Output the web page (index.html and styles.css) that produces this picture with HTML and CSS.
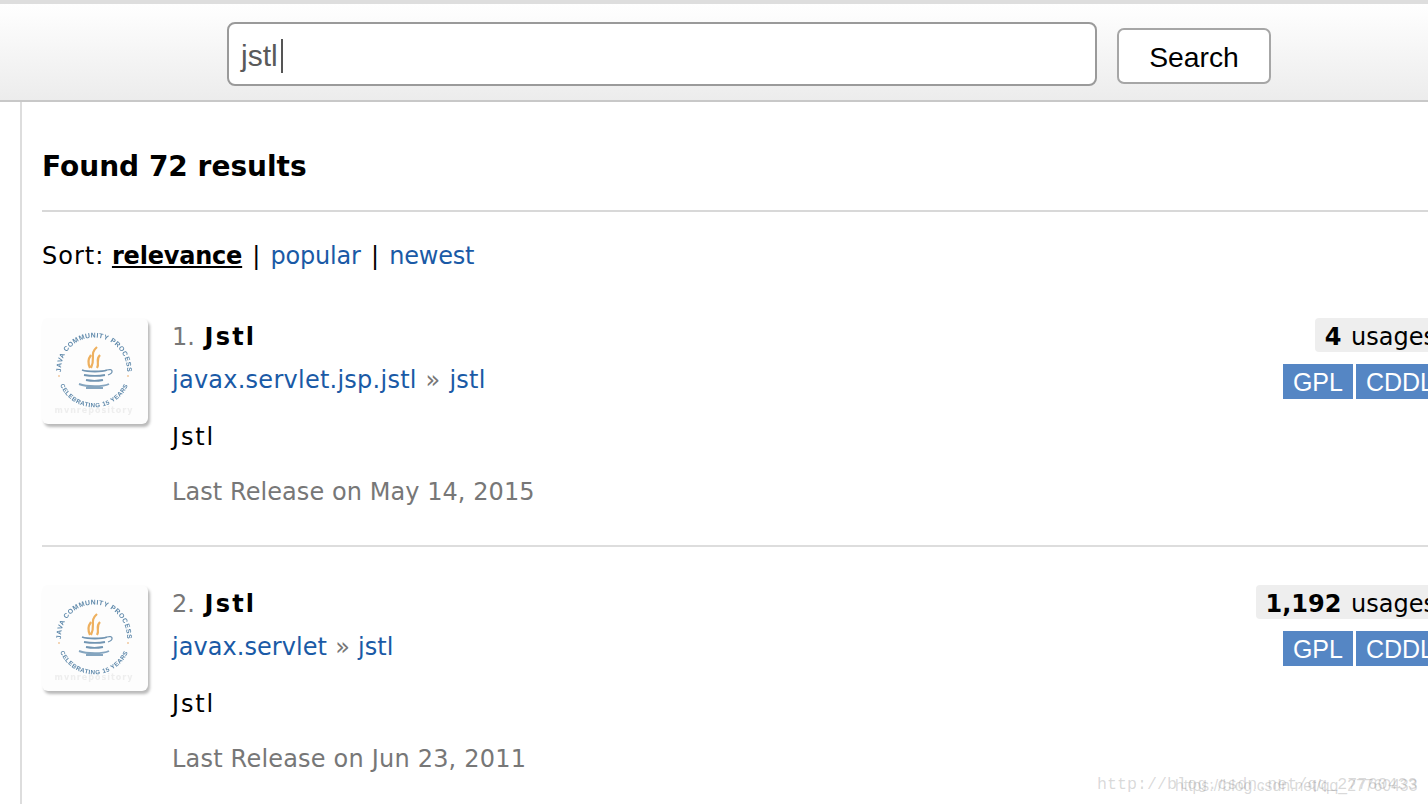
FILE: index.html
```html
<!DOCTYPE html>
<html lang="en">
<head>
<meta charset="utf-8">
<title>Search results</title>
<link rel="stylesheet" href="styles.css">
</head>
<body>
<svg class="defs" width="0" height="0" aria-hidden="true">
  <defs>
    <filter id="soft"><feGaussianBlur stdDeviation="0.55"/></filter>
    <path id="arcTop" d="M19 52.5 A33 33 0 0 1 85 52.5"/>
    <path id="arcBottom" d="M15.6 59 A37 37 0 0 0 88.4 59"/>
    <symbol id="jcp" viewBox="0 0 106 106">
      <g filter="url(#soft)">
        <text class="jcp-text"><textPath href="#arcTop" startOffset="50%" text-anchor="middle">JAVA COMMUNITY PROCESS</textPath></text>
        <text class="jcp-text jcp-text-low"><textPath href="#arcBottom" startOffset="50%" text-anchor="middle">CELEBRATING 15 YEARS</textPath></text>
        <circle cx="17" cy="58" r="1" fill="#f0c9a0"/>
        <circle cx="86" cy="58" r="1" fill="#f0c9a0"/>
        <path d="M55 29c-8 7-1 11-6 21M58 37c-5 5 0 8-3 13M49 37c-3 4-3 9-1 13" fill="none" stroke="#eeb05e" stroke-width="2.2"/>
        <path d="M40 52c6 2 20 2 25 0M42 57c6 1 16 1 21 0M44 62c5 1 12 1 17 0" fill="none" stroke="#7295b2" stroke-width="1.8"/>
        <path d="M65 52c6-2 7 3 1 5" fill="none" stroke="#7295b2" stroke-width="1.3"/>
        <path d="M37 66c8 3 24 3 30 0M44 70h17" fill="none" stroke="#85a5bf" stroke-width="1.9"/>
        <text class="jcp-mark" x="52" y="95" text-anchor="middle">mvnrepository</text>
      </g>
    </symbol>
  </defs>
</svg>

<header class="topbar">
  <form class="search">
    <div class="search-input"><span class="search-value">jstl</span><span class="caret"></span></div>
    <button class="search-btn" type="button">Search</button>
  </form>
</header>

<main class="content">
  <h2 class="found">Found 72 results</h2>
  <div class="sort"><span class="sort-label">Sort:</span> <a class="sort-active">relevance</a> <span class="pipe">|</span> <a class="link">popular</a> <span class="pipe">|</span> <a class="link">newest</a></div>

  <article class="result">
    <div class="logo"><svg class="logo-art"><use href="#jcp"/></svg></div>
    <div class="info">
      <div class="title"><span class="num">1.</span> <b class="name">Jstl</b></div>
      <div class="coords"><a class="link">javax.servlet.jsp.jstl</a> <span class="sep">»</span> <a class="link">jstl</a></div>
      <div class="desc">Jstl</div>
      <div class="date">Last Release on May 14, 2015</div>
    </div>
    <div class="meta">
      <div class="usages"><b class="count">4</b> usages</div>
      <div class="licenses"><span class="lic">GPL</span><span class="lic">CDDL</span></div>
    </div>
  </article>

  <article class="result">
    <div class="logo"><svg class="logo-art"><use href="#jcp"/></svg></div>
    <div class="info">
      <div class="title"><span class="num">2.</span> <b class="name">Jstl</b></div>
      <div class="coords coords-tight"><a class="link">javax.servlet</a> <span class="sep">»</span> <a class="link">jstl</a></div>
      <div class="desc">Jstl</div>
      <div class="date date-wide">Last Release on Jun 23, 2011</div>
    </div>
    <div class="meta">
      <div class="usages"><b class="count">1,192</b> usages</div>
      <div class="licenses"><span class="lic">GPL</span><span class="lic">CDDL</span></div>
    </div>
  </article>
</main>

<div class="watermark"><span class="wm-a">http://blog.csdn.net/qq_27760433</span><span class="wm-b">https://blog.csdn.net/qq_27760433</span></div>
</body>
</html>
```
FILE: styles.css
```css
html, body {
  margin: 0;
  height: 804px;
  overflow: hidden;
  background: #fff;
}
body {
  position: relative;
  width: 1428px;
  font-family: "DejaVu Sans", Verdana, sans-serif;
  font-size: 24px;
  color: #000;
}
.defs { position: absolute; }

.topbar {
  height: 96px;
  border-top: 4px solid #dedede;
  border-bottom: 2px solid #c8c8c8;
  background: linear-gradient(#fff, #ececec);
  box-sizing: content-box;
}
.search {
  display: flex;
  align-items: flex-start;
  gap: 20px;
  padding: 18px 0 0 227px;
}
.search-input {
  box-sizing: border-box;
  width: 870px;
  height: 64px;
  display: flex;
  align-items: center;
  padding: 4px 0 0 12px;
  background: #fff;
  border: 2px solid #9a9a9a;
  border-radius: 8px;
  font-family: "Liberation Sans", Arial, sans-serif;
  font-size: 30px;
  color: #5a5a5a;
}
.caret {
  width: 2px;
  height: 34px;
  margin-left: 3px;
  background: #555;
}
.search-btn {
  box-sizing: border-box;
  width: 154px;
  height: 56px;
  margin-top: 6px;
  padding: 2px 0 0;
  background: #fff;
  border: 2px solid #a6a6a6;
  border-radius: 7px;
  font-family: "Liberation Sans", Arial, sans-serif;
  font-size: 28.3px;
  color: #000;
}

.content {
  margin-left: 20px;
  width: 1403px;
  height: 702px;
  padding-left: 20px;
  border-left: 2px solid #ddd;
}
.found {
  margin: 0;
  padding-top: 47px;
  height: 61px;
  line-height: 36px;
  font-size: 28px;
  font-weight: 700;
  border-bottom: 2px solid #d8d8d8;
}
.sort {
  height: 106px;
  padding-top: 27px;
  box-sizing: border-box;
  line-height: 34px;
}
.sort-label { letter-spacing: 1px; }
.sort-active {
  font-weight: 700;
  text-decoration: underline;
  letter-spacing: -.2px;
}
.sort .link { letter-spacing: -.2px; }
.link { color: #1a5aa6; }
.pipe { margin: 0 2.5px; }

.result {
  display: flex;
  align-items: flex-start;
  height: 227px;
  box-sizing: content-box;
  border-bottom: 2px solid #ddd;
}
.result + .result {
  margin-top: 38px;
  border-bottom: 0;
}
.logo {
  flex: none;
  width: 106px;
  height: 106px;
  margin-right: 24px;
  background: #fdfdfd;
  border-radius: 6px;
  box-shadow: 2px 3px 3px #b9b9b9;
}
.logo-art {
  display: block;
  width: 106px;
  height: 106px;
}
.jcp-text {
  font-family: "Liberation Sans", Arial, sans-serif;
  font-size: 6.8px;
  font-weight: 700;
  letter-spacing: .5px;
  fill: #5f89ab;
}
.jcp-text-low { font-size: 6.2px; }
.jcp-mark {
  font-family: "DejaVu Sans", sans-serif;
  font-size: 8px;
  font-weight: 700;
  letter-spacing: 1px;
  fill: #eeeeee;
}
.info {
  flex: 1;
  min-width: 0;
  padding-top: 2px;
  line-height: 34px;
}
.title { height: 34px; }
.num { color: #777; }
.name { margin-left: 2px; letter-spacing: 2.2px; }
.coords { margin-top: 9px; height: 34px; letter-spacing: .25px; }
.sep { color: #777; margin: 0 1px; }
.coords-tight { letter-spacing: .05px; }
.coords-tight .sep { margin: 0 .5px; }
.desc { margin-top: 23px; height: 34px; letter-spacing: 1.8px; }
.date { margin-top: 21px; color: #777; letter-spacing: .07px; }
.date-wide { letter-spacing: .2px; }

.meta {
  flex: none;
  width: 190px;
  display: flex;
  flex-direction: column;
  align-items: flex-end;
}
.usages {
  white-space: nowrap;
  height: 34px;
  line-height: 38px;
  padding: 0 9px 0 10px;
  background: #eee;
  border-radius: 4px;
}
.count { margin-right: 2px; }
.licenses {
  display: flex;
  gap: 3px;
  margin: 12px 1px 0 0;
}
.lic {
  height: 35px;
  line-height: 37px;
  padding: 0 10px;
  background: #5586c4;
  color: #fff;
  font-family: "Liberation Sans", Arial, sans-serif;
  font-size: 25px;
}

.watermark {
  position: absolute;
  left: 1097px;
  top: 774px;
  width: 331px;
  height: 26px;
  white-space: nowrap;
  overflow: hidden;
  color: rgba(120, 120, 120, .28);
  font-family: "Liberation Mono", monospace;
}
.wm-a {
  position: absolute;
  left: 0;
  top: 0;
  font-size: 16.7px;
  line-height: 22px;
}
.wm-b {
  position: absolute;
  left: 78px;
  top: 1px;
  font-family: "Liberation Sans", sans-serif;
  font-size: 15.8px;
  line-height: 22px;
}
```
